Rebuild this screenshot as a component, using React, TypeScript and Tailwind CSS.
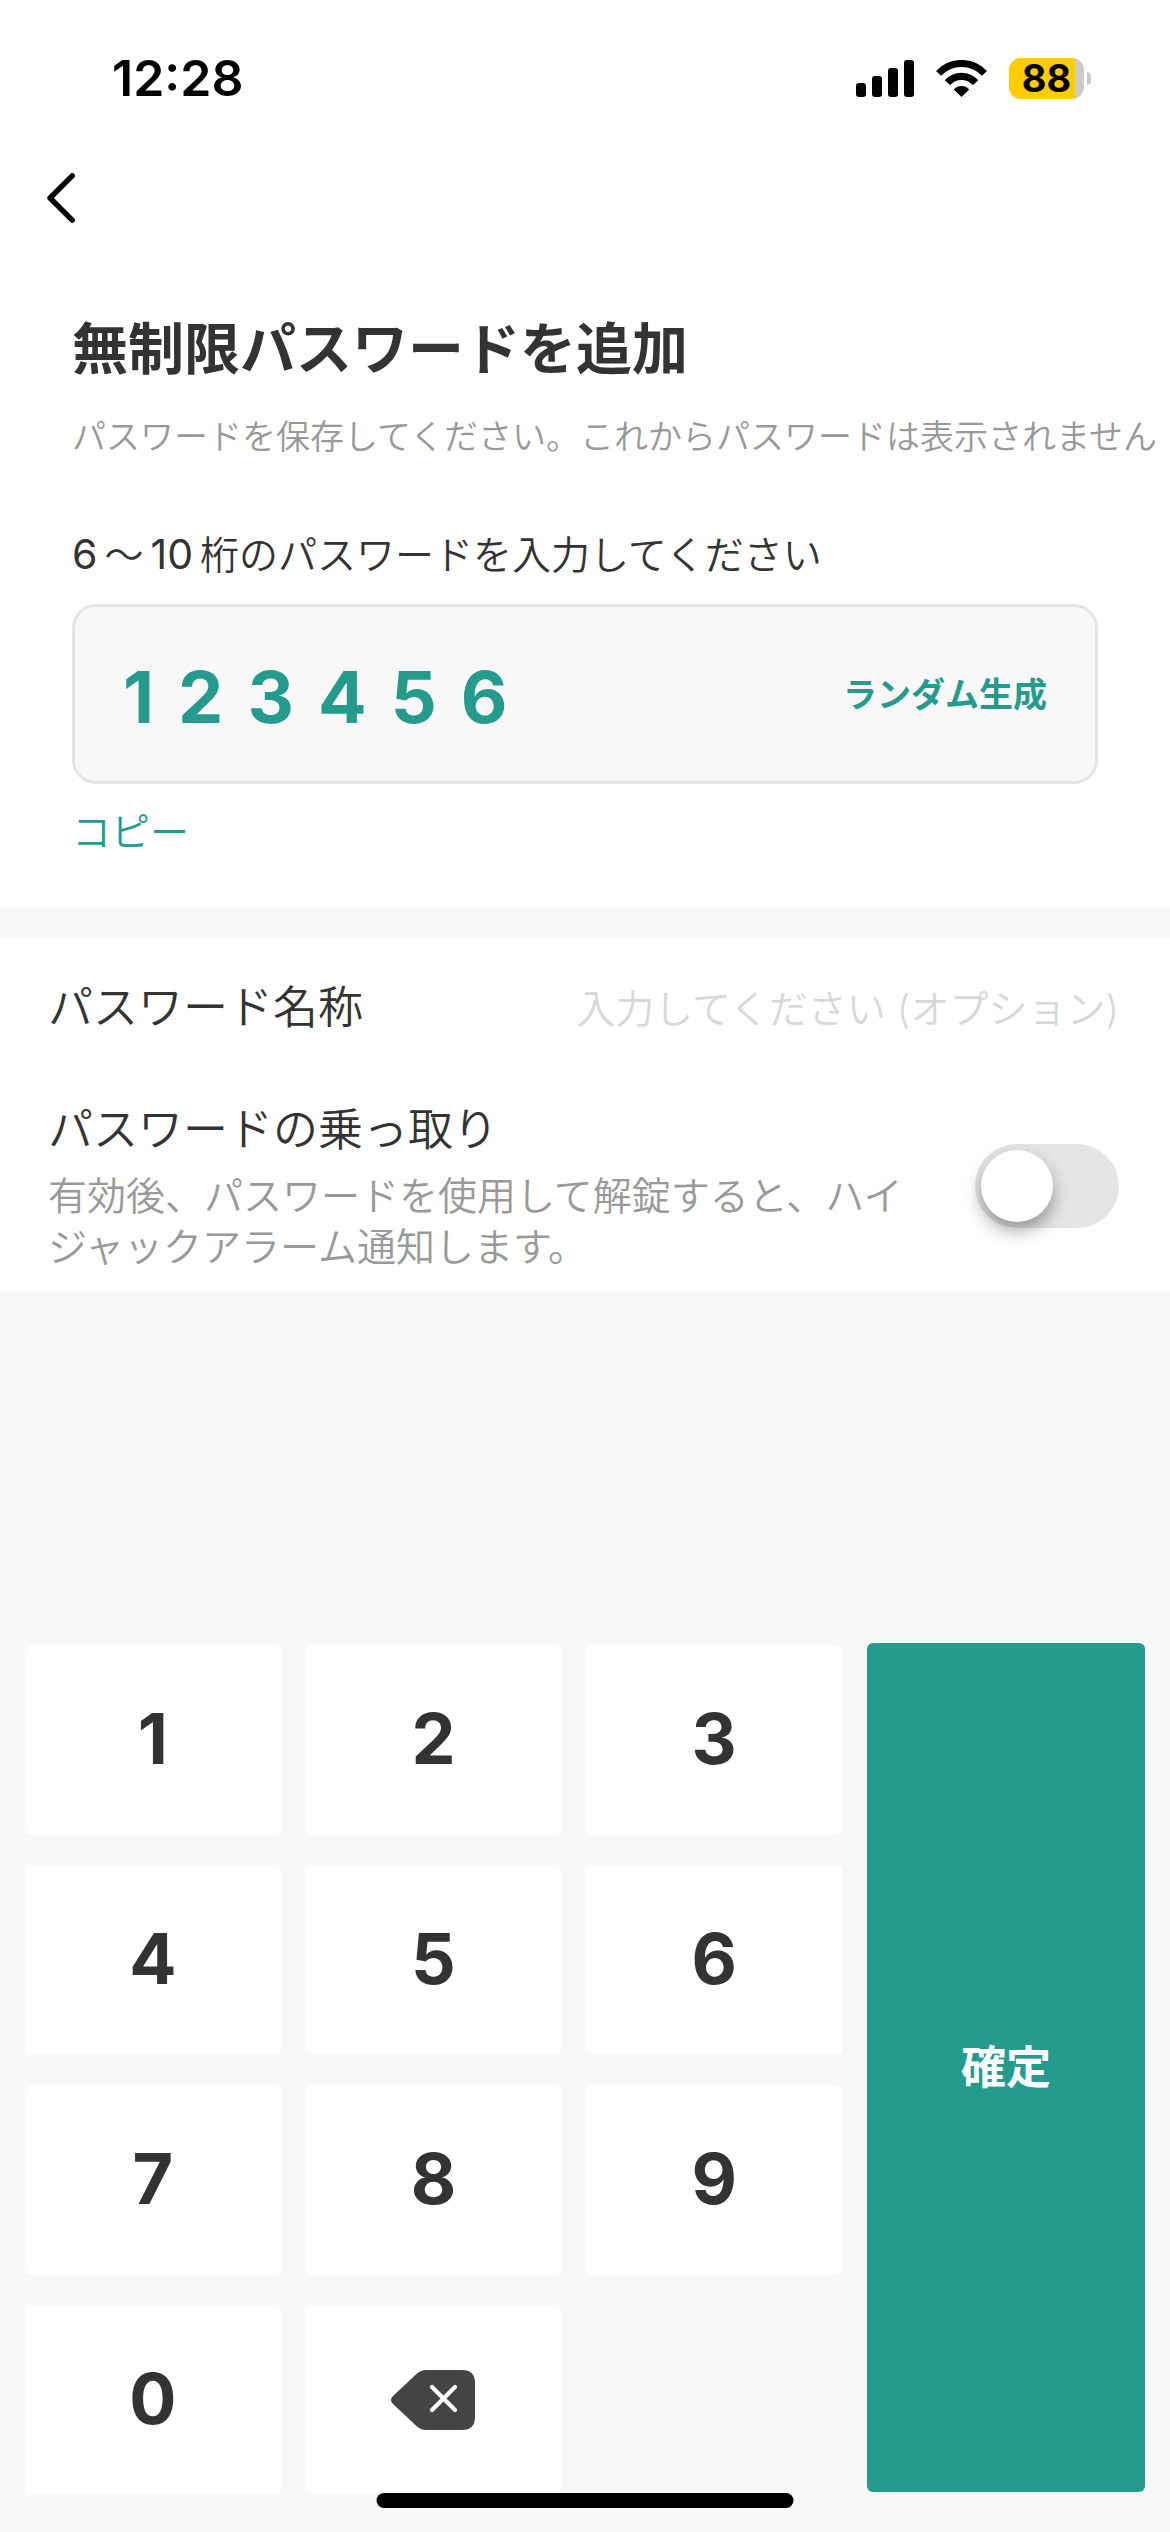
import { useState } from "react";

const THREE_PER_EM_SPACE = "\u2004";

function StatusBar() {
  return (
    <header className="flex items-center justify-between pt-12 pl-[112px] pr-[79px]">
      <time className="text-[50px] leading-[60px] font-semibold text-black">12:28</time>
      <div className="flex items-center">
        <svg className="mr-[22px]" width="58" height="37" viewBox="0 0 58 37" aria-hidden="true">
          <rect x="0" y="23" width="10" height="14" rx="3" />
          <rect x="16" y="16" width="10" height="21" rx="3" />
          <rect x="32" y="8" width="10" height="29" rx="3" />
          <rect x="48" y="0" width="10" height="37" rx="3" />
        </svg>
        <svg className="mr-[22px]" width="51" height="37" viewBox="0 0 51 37" fill="none" aria-hidden="true">
          <path d="M2.5 13.4A31.5 31.5 0 0 1 48.5 13.4" stroke="black" strokeWidth="7" />
          <path d="M11.4 22.7A18.7 18.7 0 0 1 39.6 22.7" stroke="black" strokeWidth="7.2" />
          <path d="M25.5 37L17.8 29.4A10.5 10.5 0 0 1 33.2 29.4Z" fill="black" />
        </svg>
        <div className="flex items-center gap-[3px]">
          <div className="flex h-[41px] w-[75px] items-center justify-center rounded-[12px] bg-linear-to-r from-[#ffcc00] from-88% to-[#cbcbcb] to-88% text-[38px] leading-none font-bold text-black">
            88
          </div>
          <div className="h-[13px] w-1 rounded-r-full bg-[#cbcbcb]" />
        </div>
      </div>
    </header>
  );
}

function Key({ label, onPress }: { label: string; onPress: () => void }) {
  return (
    <button
      type="button"
      onClick={onPress}
      className="h-[190px] rounded-md bg-white pb-1 text-[70px] font-bold text-[#333333]"
    >
      {label}
    </button>
  );
}

export default function App() {
  const [code, setCode] = useState("123456");
  const press = (digit: string) => setCode((c) => (c.length < 10 ? c + digit : c));
  const randomize = () => setCode(String(Math.floor(100000 + Math.random() * 900000)));

  return (
    <div
      lang="ja"
      className="relative flex min-h-screen flex-col overflow-hidden bg-[#f8f8f8] font-['Inter','Noto_Sans_CJK_JP',sans-serif] font-[350] text-[#333333]"
    >
      <section className="bg-white pb-[51px]">
        <StatusBar />
        <nav className="flex h-[180px] items-center pl-[47px]">
          <button type="button" aria-label="戻る">
            <svg width="28" height="50" viewBox="0 0 28 50" fill="none" aria-hidden="true">
              <path
                d="M25.2 2.8L3 25L25.2 47.2"
                stroke="black"
                strokeWidth="5.4"
                strokeLinecap="round"
                strokeLinejoin="round"
              />
            </svg>
          </button>
        </nav>
        <div className="px-[72px] pt-[21px]">
          <h1 className="text-[56px] leading-[80px] font-bold">無制限パスワードを追加</h1>
          <p className="mt-6 text-[34px] leading-[48px] whitespace-nowrap text-[#999999]">
            パスワードを保存してください。これからパスワードは表示されません
          </p>
          <label htmlFor="code" className="mt-[70px] flex h-12 items-baseline gap-[7px] text-[39px] leading-[46px]">
            <span className="text-[41px] font-normal">6</span>
            <span>～</span>
            <span className="text-[41px] font-normal">10</span>
            <span>桁のパスワードを入力してください</span>
          </label>
          <div className="mt-[25px] flex h-[180px] items-center rounded-3xl border-3 border-[#e5e5e5] bg-[#f8f8f8] px-12">
            <input
              id="code"
              readOnly
              value={code.split("").join(THREE_PER_EM_SPACE)}
              className="h-[90px] min-w-0 flex-1 bg-transparent pt-1.5 text-[72px] font-bold text-[#259b8e] outline-none"
            />
            <button type="button" onClick={randomize} className="text-[34px] font-bold text-[#259b8e]">
              ランダム生成
            </button>
          </div>
          <button type="button" className="mt-6 block text-[39px] leading-[48px] text-[#259b8e]">
            コピー
          </button>
        </div>
      </section>

      <section className="mt-[30px] bg-white pr-[51px] pb-[19px] pl-12">
        <div className="flex h-[142px] items-center">
          <label htmlFor="name" className="text-[45px] leading-[60px]">
            パスワード名称
          </label>
          <input
            id="name"
            placeholder="入力してください (オプション)"
            className="h-[60px] min-w-0 flex-1 bg-transparent text-right text-[39px] outline-none placeholder:text-[#d8d8d8]"
          />
        </div>
        <div className="flex items-center gap-12 pt-[21px]">
          <div className="flex-1">
            <label htmlFor="hijack" className="block text-[45px] leading-[60px]">
              パスワードの乗っ取り
            </label>
            <p className="mt-[10px] text-[39px] leading-[51px] text-[#999999]">
              有効後、パスワードを使用して解錠すると、ハイジャックアラーム通知します。
            </p>
          </div>
          <input
            id="hijack"
            type="checkbox"
            role="switch"
            className="flex h-[84px] w-36 shrink-0 appearance-none items-center rounded-full bg-[#e5e5e5] px-1.5 before:size-[72px] before:rounded-full before:bg-white before:shadow-[0_9px_18px_rgba(0,0,0,0.35)] before:content-[''] checked:justify-end checked:bg-[#259b8e]"
          />
        </div>
      </section>

      <div className="mt-auto flex gap-[25px] px-[25px] pb-[37px]">
        <div className="grid flex-1 grid-cols-3 gap-x-[25px] gap-y-[30px] pt-0.5">
          {["1", "2", "3", "4", "5", "6", "7", "8", "9", "0"].map((digit) => (
            <Key key={digit} label={digit} onPress={() => press(digit)} />
          ))}
          <button
            type="button"
            aria-label="削除"
            onClick={() => setCode((c) => c.slice(0, -1))}
            className="flex h-[190px] items-center justify-center rounded-md bg-white"
          >
            <svg width="84" height="60" viewBox="0 0 84 60" fill="none" aria-hidden="true">
              <path
                d="M35 0H71Q84 0 84 13V47Q84 60 71 60H35Q30 60 26 56.500L2 34Q-2 30 2 26L26 3.500Q30 0 35 0Z"
                fill="#444444"
              />
              <path d="M41 17L64 40M64 17L41 40" stroke="white" strokeWidth="4.200" strokeLinecap="round" />
            </svg>
          </button>
        </div>
        <button
          type="button"
          className="mb-[3px] w-[278px] rounded-md bg-[#259b8e] text-[45px] font-bold text-white"
        >
          確定
        </button>
      </div>

      <div className="absolute bottom-6 left-1/2 h-[15px] w-[417px] -translate-x-1/2 rounded-full bg-black" />
    </div>
  );
}
